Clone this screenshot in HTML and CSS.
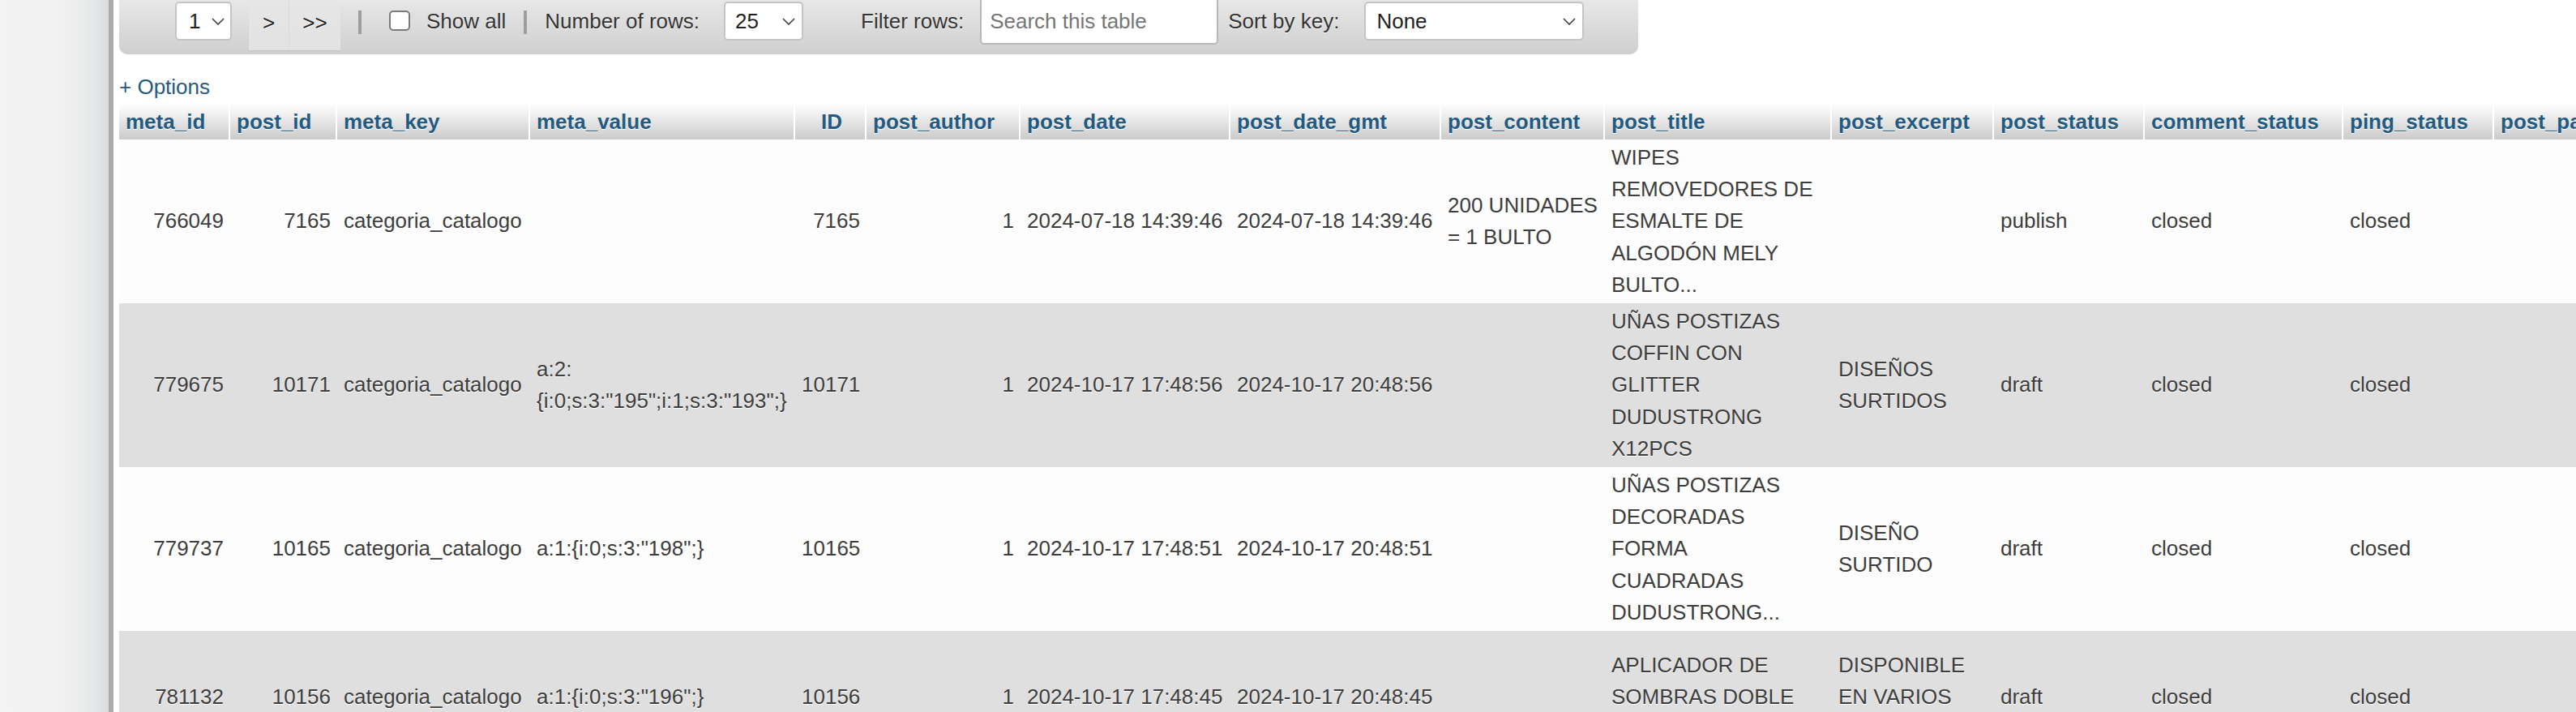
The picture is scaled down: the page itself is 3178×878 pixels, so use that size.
FILE: index.html
```html
<!DOCTYPE html>
<html lang="en">
<head>
<meta charset="utf-8">
<title>wp_postmeta - Browse</title>
<link rel="stylesheet" href="styles.css">
</head>
<body>
<div class="page">
  <aside class="nav"></aside>
  <div class="divider"></div>
  <main class="main">
    <div class="toolbar">
      <div class="select sel-page"><span>1</span><svg class="chev" viewBox="0 0 16 9" width="16" height="9"><polyline points="1,1 8,8 15,1"/></svg></div>
      <div class="btns"><span class="btn btn-next">&gt;</span><span class="btn btn-last">&gt;&gt;</span></div>
      <span class="sep sep1"></span>
      <input type="checkbox" class="checkbox">
      <span class="lbl lbl-show">Show all</span>
      <span class="sep sep2"></span>
      <span class="lbl lbl-rows">Number of rows:</span>
      <div class="select sel-rows"><span>25</span><svg class="chev" viewBox="0 0 16 9" width="16" height="9"><polyline points="1,1 8,8 15,1"/></svg></div>
      <span class="lbl lbl-filter">Filter rows:</span>
      <input type="text" class="search" placeholder="Search this table">
      <span class="lbl lbl-sort">Sort by key:</span>
      <div class="select sel-sort"><span>None</span><svg class="chev" viewBox="0 0 16 9" width="16" height="9"><polyline points="1,1 8,8 15,1"/></svg></div>
    </div>

    <a class="options" href="#">+ Options</a>

    <table class="grid">
      <thead>
        <tr>
          <th class="c-metaid">meta_id</th>
          <th class="c-postid">post_id</th>
          <th class="c-metakey">meta_key</th>
          <th class="c-metavalue">meta_value</th>
          <th class="c-id">ID</th>
          <th class="c-author">post_author</th>
          <th class="c-date">post_date</th>
          <th class="c-dategmt">post_date_gmt</th>
          <th class="c-content">post_content</th>
          <th class="c-title">post_title</th>
          <th class="c-excerpt">post_excerpt</th>
          <th class="c-status">post_status</th>
          <th class="c-comment">comment_status</th>
          <th class="c-ping">ping_status</th>
          <th class="c-parent">post_parent</th>
        </tr>
      </thead>
      <tbody>
        <tr class="odd">
          <td class="num">766049</td>
          <td class="num">7165</td>
          <td>categoria_catalogo</td>
          <td></td>
          <td class="num">7165</td>
          <td class="num">1</td>
          <td>2024-07-18 14:39:46</td>
          <td>2024-07-18 14:39:46</td>
          <td>200 UNIDADES<br>= 1 BULTO</td>
          <td>WIPES<br>REMOVEDORES DE<br>ESMALTE DE<br>ALGODÓN MELY<br>BULTO...</td>
          <td></td>
          <td>publish</td>
          <td>closed</td>
          <td>closed</td>
          <td class="num">0</td>
        </tr>
        <tr class="even">
          <td class="num">779675</td>
          <td class="num">10171</td>
          <td>categoria_catalogo</td>
          <td>a:2:<br>{i:0;s:3:"195";i:1;s:3:"193";}</td>
          <td class="num">10171</td>
          <td class="num">1</td>
          <td>2024-10-17 17:48:56</td>
          <td>2024-10-17 20:48:56</td>
          <td></td>
          <td>UÑAS POSTIZAS<br>COFFIN CON<br>GLITTER<br>DUDUSTRONG<br>X12PCS</td>
          <td>DISEÑOS<br>SURTIDOS</td>
          <td>draft</td>
          <td>closed</td>
          <td>closed</td>
          <td class="num">0</td>
        </tr>
        <tr class="odd">
          <td class="num">779737</td>
          <td class="num">10165</td>
          <td>categoria_catalogo</td>
          <td>a:1:{i:0;s:3:"198";}</td>
          <td class="num">10165</td>
          <td class="num">1</td>
          <td>2024-10-17 17:48:51</td>
          <td>2024-10-17 20:48:51</td>
          <td></td>
          <td>UÑAS POSTIZAS<br>DECORADAS<br>FORMA<br>CUADRADAS<br>DUDUSTRONG...</td>
          <td>DISEÑO<br>SURTIDO</td>
          <td>draft</td>
          <td>closed</td>
          <td>closed</td>
          <td class="num">0</td>
        </tr>
        <tr class="even tall">
          <td class="num">781132</td>
          <td class="num">10156</td>
          <td>categoria_catalogo</td>
          <td>a:1:{i:0;s:3:"196";}</td>
          <td class="num">10156</td>
          <td class="num">1</td>
          <td>2024-10-17 17:48:45</td>
          <td>2024-10-17 20:48:45</td>
          <td></td>
          <td>APLICADOR DE<br>SOMBRAS DOBLE<br>PUNTA...</td>
          <td>DISPONIBLE<br>EN VARIOS<br>COLORES</td>
          <td>draft</td>
          <td>closed</td>
          <td>closed</td>
          <td class="num">0</td>
        </tr>
      </tbody>
    </table>
  </main>
</div>
</body>
</html>
```

FILE: styles.css
```css
html, body {
  margin: 0;
  padding: 0;
  overflow: hidden;
}

body {
  width: 3178px;
  height: 878px;
  background: #fff;
  color: #3d3d3d;
  font-family: "Liberation Sans", Arial, Helvetica, sans-serif;
  font-size: 26px;
}

.page {
  display: flex;
  height: 878px;
}

.nav {
  flex: none;
  width: 134px;
  background: linear-gradient(to right, #f3f3f3 0%, #f2f2f2 50%, #e9eaeb 80%, #dcdde0 100%);
}

.divider {
  flex: none;
  width: 6px;
  background: #ababab;
}

.main {
  flex: 1;
  min-width: 0;
  overflow: hidden;
  padding-left: 7px;
}

/* ---------- navigation toolbar ---------- */
.toolbar {
  display: flex;
  align-items: flex-start;
  box-sizing: border-box;
  width: 1874px;
  height: 67px;
  background: linear-gradient(#e7e7e7, #cfcfcf);
  border-radius: 0 0 10px 10px;
  color: #333;
  text-shadow: 0 1px 0 #fff;
}

.lbl {
  margin-top: 7px;
  line-height: 39px;
  white-space: nowrap;
}

.select {
  display: flex;
  align-items: center;
  justify-content: space-between;
  box-sizing: border-box;
  height: 48px;
  margin-top: 2px;
  line-height: 39px;
  background: #fff;
  border: 2px solid #c4c4c4;
  border-radius: 5px;
  color: #222;
  text-shadow: none;
}

.chev {
  flex: none;
  fill: none;
  stroke: #444;
  stroke-width: 1.7;
}

.sel-page {
  width: 70px;
  margin-left: 69px;
  padding: 0 7px 0 15px;
}

.sel-rows {
  width: 98px;
  margin-left: 30px;
  padding: 0 8px 0 12px;
}

.sel-sort {
  width: 271px;
  margin-left: 31px;
  padding: 0 8px 0 13px;
}

.btns {
  display: flex;
  margin-left: 21px;
  height: 62px;
  box-shadow: 0 1px 1px rgba(0, 0, 0, 0.05);
}

.btn {
  display: block;
  box-sizing: border-box;
  height: 62px;
  padding-top: 9px;
  line-height: 39px;
  text-align: center;
  background: linear-gradient(#e6e6e6, #e2e2e2);
  color: #222;
}

.btn-next {
  width: 50px;
  border-right: 1px solid #dadada;
}

.btn-last {
  width: 63px;
}

.sep {
  flex: none;
  width: 4px;
  height: 29px;
  margin-top: 13px;
  background: #9d9d9d;
}

.sep1 {
  margin-left: 22px;
}

.sep2 {
  margin-left: 22px;
}

.checkbox {
  appearance: none;
  -webkit-appearance: none;
  flex: none;
  box-sizing: border-box;
  width: 26px;
  height: 25px;
  margin: 13px 0 0 34px;
  border: 2px solid #7b7b7b;
  border-radius: 5px;
  background: #fff;
}

.lbl-show {
  margin-left: 20px;
}

.lbl-rows {
  margin-left: 22px;
}

.lbl-filter {
  margin-left: 71px;
}

.search {
  box-sizing: border-box;
  width: 294px;
  height: 61px;
  margin: -6px 0 0 20px;
  padding: 4px 10px 0;
  border: 2px solid #b8b8b8;
  border-radius: 5px;
  background: #fff;
  font-family: inherit;
  font-size: 26px;
  color: #333;
  outline: none;
}

.search::placeholder {
  color: #767676;
}

.lbl-sort {
  margin-left: 12px;
}

/* ---------- options link ---------- */
.options {
  display: block;
  margin-top: 21px;
  line-height: 39px;
  color: #235a81;
  text-decoration: none;
}

/* ---------- data grid ---------- */
.grid {
  table-layout: fixed;
  border-collapse: separate;
  border-spacing: 0;
  width: 3130px;
  margin-top: 1px;
}

.grid th {
  box-sizing: border-box;
  height: 44px;
  padding: 2px 8px;
  line-height: 40px;
  text-align: left;
  vertical-align: middle;
  font-weight: bold;
  color: #235a81;
  background: linear-gradient(#ffffff, #cbcbcb);
  border-right: 2px solid #fff;
  text-shadow: 0 1px 0 #fff;
  white-space: nowrap;
  overflow: hidden;
}

.grid td {
  box-sizing: border-box;
  padding: 3px 8px;
  line-height: 39.2px;
  vertical-align: middle;
  white-space: nowrap;
  text-shadow: 0 1px 0 #fff;
}

.grid tr.odd td {
  background: #fdfdfd;
}

.grid tr.even td {
  background: #dfdfdf;
}

.grid tr.tall {
  height: 163px;
}

.grid td.num {
  text-align: right;
}

.c-metaid { width: 137px; }
.c-postid { width: 132px; }
.c-metakey { width: 238px; }
.c-metavalue { width: 327px; }
.grid th.c-id { width: 88px; padding-left: 32px; }
.c-author { width: 190px; }
.c-date { width: 259px; }
.c-dategmt { width: 260px; }
.c-content { width: 202px; }
.c-title { width: 280px; }
.c-excerpt { width: 200px; }
.c-status { width: 186px; }
.c-comment { width: 245px; }
.c-ping { width: 186px; }
.c-parent { width: 200px; }
```
